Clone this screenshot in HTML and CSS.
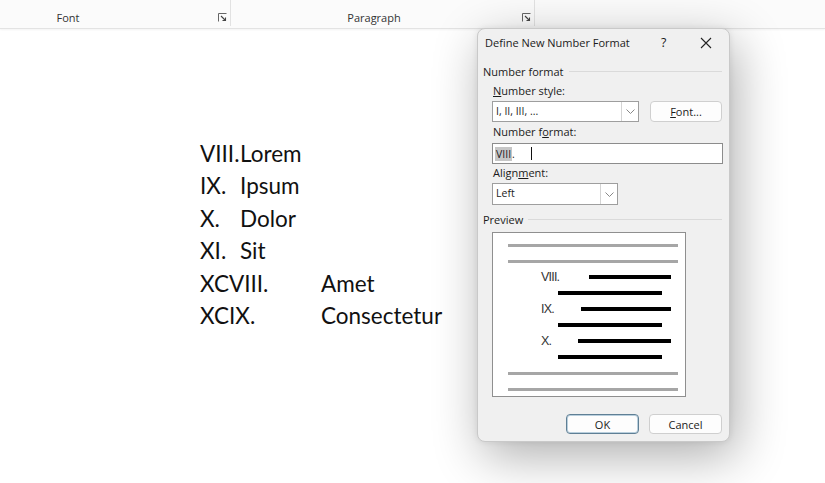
FILE: index.html
```html
<!DOCTYPE html>
<html lang="en">
<head>
  <meta charset="UTF-8" />
  <title>Define New Number Format</title>
  <link rel="stylesheet" href="styles.css">
</head>
<body>
  <!-- ribbon group labels -->
  <div class="ribbon">
    <div class="rgroup font-grp">
      <span class="rlabel">Font</span>
      <span class="launcher"><svg width="9" height="9" viewBox="0 0 9 9"><path d="M0.5 8.5V0.5h8" fill="none" stroke="#666"/><path d="M3 3l4.5 4.5M7.5 4.5v3h-3" fill="none" stroke="#444" stroke-width="1.1"/></svg></span>
    </div>
    <div class="rgroup para-grp">
      <span class="rlabel">Paragraph</span>
      <span class="launcher"><svg width="9" height="9" viewBox="0 0 9 9"><path d="M0.5 8.5V0.5h8" fill="none" stroke="#666"/><path d="M3 3l4.5 4.5M7.5 4.5v3h-3" fill="none" stroke="#444" stroke-width="1.1"/></svg></span>
    </div>
  </div>

  <!-- document body -->
  <div class="page">
    <ol class="roman">
      <li><span class="num">VIII.</span><span>Lorem</span></li>
      <li><span class="num">IX.</span><span>Ipsum</span></li>
      <li><span class="num">X.</span><span>Dolor</span></li>
      <li><span class="num">XI.</span><span>Sit</span></li>
      <li><span class="num wide">XCVIII.</span><span>Amet</span></li>
      <li><span class="num wide">XCIX.</span><span>Consectetur</span></li>
    </ol>
  </div>

  <!-- dialog -->
  <div class="dlg">
    <div class="dlg-title">
      <span class="ttl">Define New Number Format</span>
      <span class="help">?</span>
      <span class="close"><svg width="12" height="12" viewBox="0 0 12 12"><path d="M1 1l10 10M11 1L1 11" stroke="#222" stroke-width="1.1"/></svg></span>
    </div>

    <div class="ghead"><span>Number format</span></div>

    <div class="flabel l1"><u>N</u>umber style:</div>
    <div class="frow">
      <div class="combo style-combo">
        <span class="val">I, II, III, ...</span>
        <span class="arrow"><svg width="9" height="5" viewBox="0 0 9 5"><path d="M0.5 0.5l4 4 4-4" fill="none" stroke="#888"/></svg></span>
      </div>
      <button class="btn font-btn" type="button"><u>F</u>ont...</button>
    </div>

    <div class="flabel l2">Number f<u>o</u>rmat:</div>
    <div class="textbox"><span class="sel">VIII</span>.<span class="caret"></span></div>

    <div class="flabel l3">Align<u>m</u>ent:</div>
    <div class="combo align-combo">
      <span class="val">Left</span>
      <span class="arrow"><svg width="9" height="5" viewBox="0 0 9 5"><path d="M0.5 0.5l4 4 4-4" fill="none" stroke="#888"/></svg></span>
    </div>

    <div class="ghead prev-head"><span>Preview</span></div>

    <div class="preview">
      <div class="prow"><i class="bar gray"></i></div>
      <div class="prow"><i class="bar gray"></i></div>
      <div class="prow num-row"><span class="pnum">VIII.</span><i class="bar b1"></i></div>
      <div class="prow"><i class="bar body"></i></div>
      <div class="prow num-row"><span class="pnum">IX.</span><i class="bar b2"></i></div>
      <div class="prow"><i class="bar body"></i></div>
      <div class="prow num-row"><span class="pnum">X.</span><i class="bar b3"></i></div>
      <div class="prow"><i class="bar body"></i></div>
      <div class="prow"><i class="bar gray"></i></div>
      <div class="prow"><i class="bar gray"></i></div>
    </div>

    <div class="actions">
      <button class="btn ok" type="button">OK</button>
      <button class="btn" type="button">Cancel</button>
    </div>
  </div>
</body>
</html>
```

FILE: styles.css
```css
body{margin:0;background:#fff;font-family:"Open Sans","Noto Sans",Arial,sans-serif;color:#1b1b1b;overflow:hidden}

/* ribbon */
.ribbon{display:flex;height:28px;background:#fbfbfb;border-bottom:1px solid #e3e3e3;box-shadow:0 1px 2px rgba(0,0,0,.05)}
.rgroup{position:relative;display:flex;align-items:flex-end;justify-content:center;padding-bottom:1px;box-sizing:border-box;border-right:1px solid #e2e2e2;margin-bottom:2px}
.font-grp{width:231px}
.para-grp{width:304px}
.rlabel{font-size:11px;color:#333;line-height:14px}
.font-grp .rlabel{margin-right:94px}
.para-grp .rlabel{margin-right:17px}
.launcher{position:absolute;right:3px;bottom:4px;width:9px;height:9px;display:flex}

/* document */
.page{padding:109px 0 0 200px}
.roman{list-style:none;margin:0;padding:0;font-family:Lato,"Liberation Sans",sans-serif;font-size:22.5px;line-height:32.4px;color:#111}
.roman li{display:flex}
.num{min-width:40px}
.num.wide{min-width:121px}

/* dialog */
.dlg{position:absolute;left:477px;top:28px;width:253px;height:414px;box-sizing:border-box;background:#f0f0f0;border:1px solid #c9c9c9;border-radius:8px;box-shadow:6px 14px 50px rgba(0,0,0,.32),0 0 6px rgba(0,0,0,.08);font-size:11px}
.dlg-title{display:flex;align-items:center;height:27px;padding-left:7px}
.ttl{width:176px;font-size:11px}
.help{width:39px;font-size:12.5px}
.close{display:flex}
.ghead{display:flex;align-items:center;height:16px;margin-top:7px;padding-left:5px;padding-right:7px}
.ghead:after{content:"";flex:1;border-top:1px solid #dadada;margin-left:5px}
.flabel{height:16px;line-height:16px;padding-left:15px}
.l1{margin-top:4px}
.l2{margin-top:2px}
.l3{margin-top:1px}
.frow{display:flex;padding-left:14px;margin-top:2px}
.combo{display:flex;align-items:stretch;height:21px;box-sizing:border-box;background:#fff;border:1px solid #9e9e9e}
.combo .val{flex:1;padding-left:3px;line-height:19px;font-size:10.5px}
.combo .arrow{width:16px;border-left:1px solid #d4d4d4;display:flex;align-items:center;justify-content:center}
.style-combo{width:147px}
.align-combo{width:126px;margin:2px 0 0 14px;height:22px}
.btn{font-family:inherit;font-size:11px;color:#1b1b1b;background:#fdfdfd;border:1px solid #cfcfcf;border-radius:4px;height:21px;padding:0;cursor:pointer}
.font-btn{width:72px;margin-left:11px}
.textbox{display:flex;align-items:center;height:21px;width:231px;box-sizing:border-box;margin:3px 0 0 14px;background:#fff;border:1px solid #8c8c8c;padding-left:2px;font-size:10.5px}
.textbox .sel{background:#c6c6c6;padding:0 1px}
.caret{width:1px;height:13px;background:#111;margin-left:16px}
.prev-head{margin-top:6px}
.preview{margin:5px 0 0 14px;width:194px;height:165px;box-sizing:border-box;background:#fff;border:1px solid #8f8f8f;padding-top:4px}
.prow{display:flex;align-items:center;height:16px;padding-left:15px}
.bar{display:block;height:3px}
.bar.gray{width:170px;background:#a6a6a6}
.bar.body{width:104px;margin-left:50px;background:#000;height:4px}
.num-row{padding-left:48px}
.pnum{font-family:"Liberation Sans",Arial,sans-serif;font-size:12.5px;color:#333;letter-spacing:-.8px}
.num-row .bar{margin-left:auto;margin-right:14px;background:#000;height:4px}
.b1{width:82px}
.b2{width:90px}
.b3{width:93px}
.actions{display:flex;justify-content:flex-end;gap:10px;margin-top:17px;padding-right:7px}
.actions .btn{width:73px;height:20px}
.btn.ok{border:1px solid #5f7f95;box-shadow:inset 0 0 0 1px #b9cfdd}
```
